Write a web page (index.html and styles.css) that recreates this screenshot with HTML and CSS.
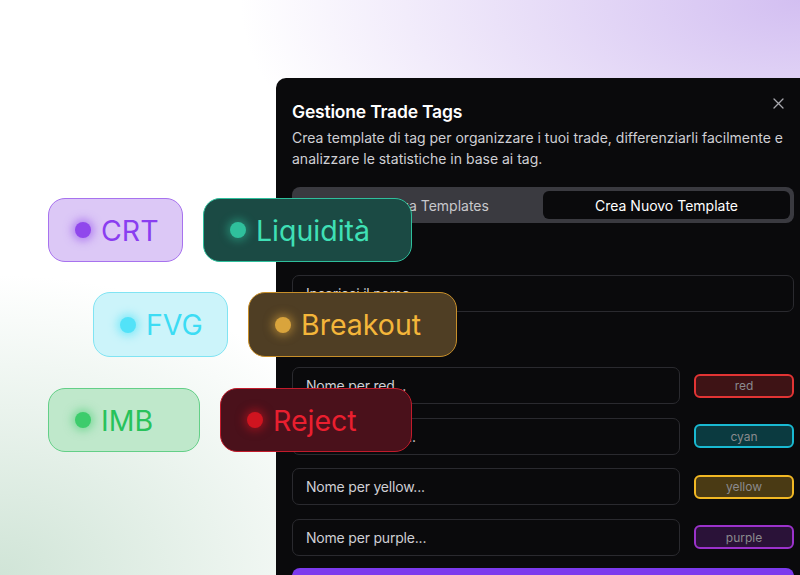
FILE: index.html
```html
<!DOCTYPE html>
<html lang="it">
<head>
    <meta charset="UTF-8">
    <meta name="viewport" content="width=device-width, initial-scale=1.0">
    <title>Gestione Trade Tags</title>
    <link rel="stylesheet" href="styles.css">
</head>
<body>
    <div class="stage">
        <div class="panel">
            <button class="close-button" aria-label="Chiudi">
                <svg width="11" height="11" viewBox="0 0 11 11"><path d="M1 1L10 10M10 1L1 10" stroke="#a8a8ae" stroke-width="1.3" stroke-linecap="round"/></svg>
            </button>
            <h2>Gestione Trade Tags</h2>
            <p class="panel-desc">Crea template di tag per organizzare i tuoi trade, differenziarli facilmente e analizzare le statistiche in base ai tag.</p>

            <div class="tabs">
                <div class="tab">Visualizza Templates</div>
                <div class="tab active">Crea Nuovo Template</div>
            </div>

            <label class="field-label">Nome Template</label>
            <div class="input">Inserisci il nome...</div>

            <label class="field-label label-tags">Tag del Template</label>
            <div class="tag-rows">
                <div class="tag-row">
                    <div class="input">Nome per red...</div>
                    <div class="swatch swatch-red">red</div>
                </div>
                <div class="tag-row">
                    <div class="input">Nome per cyan...</div>
                    <div class="swatch swatch-cyan">cyan</div>
                </div>
                <div class="tag-row">
                    <div class="input">Nome per yellow...</div>
                    <div class="swatch swatch-yellow">yellow</div>
                </div>
                <div class="tag-row">
                    <div class="input">Nome per purple...</div>
                    <div class="swatch swatch-purple">purple</div>
                </div>
            </div>
            <button class="save-button"></button>
        </div>

        <!-- floating tags over the panel -->
        <div class="chip chip-crt"><span class="dot"></span>CRT</div>
        <div class="chip chip-liq"><span class="dot"></span>Liquidità</div>
        <div class="chip chip-fvg"><span class="dot"></span>FVG</div>
        <div class="chip chip-brk"><span class="dot"></span>Breakout</div>
        <div class="chip chip-imb"><span class="dot"></span>IMB</div>
        <div class="chip chip-rej"><span class="dot"></span>Reject</div>
    </div>
</body>
</html>
```

FILE: styles.css
```css
html, body {
    margin: 0;
    padding: 0;
    height: 100%;
    overflow: hidden;
}
body {
    font-family: Inter, "Noto Sans", sans-serif;
    background-color: #ffffff;
    background-image:
        radial-gradient(ellipse 560px 280px at 100% 0%, rgba(206, 184, 240, 0.9), rgba(206, 184, 240, 0) 100%),
        radial-gradient(ellipse 400px 300px at 0% 100%, rgba(200, 224, 208, 0.85), rgba(200, 224, 208, 0) 100%);
}
.stage {
    position: relative;
    width: 800px;
    height: 575px;
    overflow: hidden;
    padding: 78px 0 0 276px;
    box-sizing: border-box;
}
.panel {
    position: relative;
    width: 534px;
    height: 520px;
    box-sizing: border-box;
    padding: 22px 16px;
    background-color: #0a0a0c;
    border-radius: 10px 0 0 0;
    color: #ffffff;
}
.close-button {
    position: absolute;
    top: 19px;
    right: 26px;
    padding: 0;
    border: none;
    background: none;
    cursor: pointer;
}
.panel h2 {
    margin: 0;
    font-size: 17.5px;
    line-height: 24px;
    font-weight: 600;
    letter-spacing: -0.2px;
}
.panel-desc {
    margin: 3px 0 0;
    font-size: 14px;
    line-height: 21px;
    color: #cfcfd4;
}
.tabs {
    display: grid;
    grid-template-columns: 1fr 1fr;
    margin-top: 18px;
    padding: 4px;
    height: 36px;
    box-sizing: border-box;
    background-color: #3a3a40;
    border-radius: 8px;
}
.tab {
    display: flex;
    align-items: center;
    justify-content: center;
    font-size: 14px;
    color: #c8c8cc;
    border-radius: 6px;
}
.tab.active {
    background-color: #0a0a0c;
    color: #ffffff;
}
.field-label {
    display: block;
    margin: 16px 0;
    font-size: 14px;
    line-height: 20px;
    color: #e0e0e4;
}
.label-tags {
    margin: 17px 0 18px;
}
.input {
    height: 37px;
    box-sizing: border-box;
    padding: 0 13px;
    display: flex;
    align-items: center;
    border: 1px solid #2a2a2f;
    border-radius: 7px;
    font-size: 14px;
    color: #cfcfd4;
    letter-spacing: -0.2px;
}
.tag-rows {
    display: flex;
    flex-direction: column;
    gap: 13.5px;
}
.tag-row {
    display: flex;
    align-items: center;
    gap: 14px;
}
.tag-row .input {
    flex: 1;
}
.swatch {
    width: 100px;
    height: 24px;
    box-sizing: border-box;
    display: flex;
    align-items: center;
    justify-content: center;
    border-radius: 6px;
    border: 2px solid;
    font-size: 12px;
    color: #8a8a8e;
}
.swatch-red {
    background-color: #3e1315;
    border-color: #e23434;
}
.swatch-cyan {
    background-color: #0b3a40;
    border-color: #19b9d2;
}
.swatch-yellow {
    background-color: #4a3a14;
    border-color: #f2b824;
}
.swatch-purple {
    background-color: #2a1238;
    border-color: #9b32cb;
}
.save-button {
    margin-top: 12px;
    width: 100%;
    height: 40px;
    border: none;
    border-radius: 8px;
    background-color: #7c3aed;
}

/* floating chips */
.chip {
    position: absolute;
    height: 64px;
    box-sizing: border-box;
    display: flex;
    align-items: center;
    gap: 10px;
    padding-left: 26px;
    border: 1px solid;
    border-radius: 17px;
    font-size: 28.5px;
}
.dot {
    width: 16px;
    height: 16px;
    border-radius: 50%;
    flex-shrink: 0;
}
.chip-crt {
    left: 48px; top: 198px; width: 135px;
    background-color: #dcc8f6;
    border-color: #a772ee;
    color: #8a3ef0;
}
.chip-crt .dot { background-color: #9047ec; box-shadow: 0 0 8px 3px rgba(144, 71, 236, 0.55); }
.chip-liq {
    left: 203px; top: 198px; width: 209px;
    background-color: #1b4a44;
    border-color: #2ebf9c;
    color: #3fe0b6;
}
.chip-liq .dot { background-color: #2fc09c; box-shadow: 0 0 8px 3px rgba(47, 192, 156, 0.45); }
.chip-fvg {
    left: 93px; top: 292px; width: 135px; height: 65px;
    background-color: #ccf4fa;
    border-color: #80e4f3;
    color: #3cdcf4;
}
.chip-fvg .dot { background-color: #52e2f8; box-shadow: 0 0 8px 3px rgba(82, 226, 248, 0.6); }
.chip-brk {
    left: 248px; top: 292px; width: 209px; height: 65px;
    background-color: #4f3e24;
    border-color: #c88f2a;
    color: #f4b63a;
}
.chip-brk .dot { background-color: #d9a43c; box-shadow: 0 0 8px 3px rgba(217, 164, 60, 0.5); }
.chip-imb {
    left: 48px; top: 388px; width: 152px;
    background-color: #bfe8cb;
    border-color: #63cf87;
    color: #28c25b;
}
.chip-imb .dot { background-color: #3dcc6c; box-shadow: 0 0 8px 3px rgba(61, 204, 108, 0.5); }
.chip-rej {
    left: 220px; top: 388px; width: 192px;
    background-color: #4a111b;
    border-color: #c21b2b;
    color: #ea1f2f;
}
.chip-rej .dot { background-color: #d0141f; box-shadow: 0 0 8px 3px rgba(208, 20, 31, 0.5); }
```
